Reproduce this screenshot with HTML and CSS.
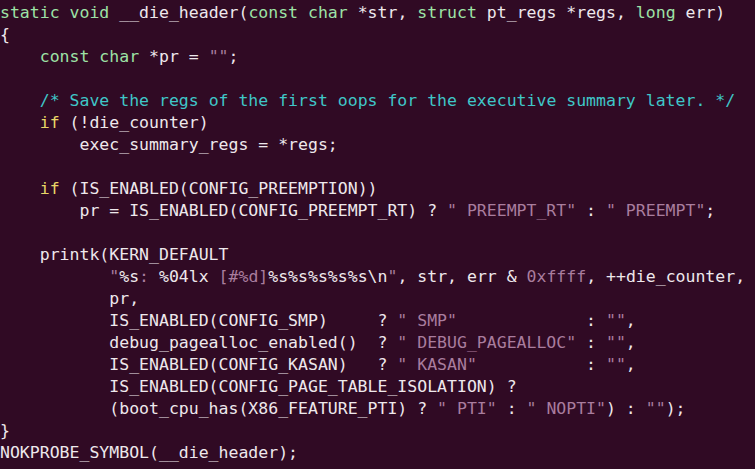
FILE: index.html
```html
<!DOCTYPE html>
<html>
<head>
<meta charset="utf-8">
<link rel="stylesheet" href="styles.css">
</head>
<body>
<pre class="code"><span class="t">static</span> <span class="t">void</span> __die_header(<span class="t">const</span> <span class="t">char</span> *str, <span class="t">struct</span> pt_regs *regs, <span class="t">long</span> err)
{
    <span class="t">const</span> <span class="t">char</span> *pr = <span class="k">""</span>;

    <span class="c">/* Save the regs of the first oops for the executive summary later. */</span>
    <span class="s">if</span> (!die_counter)
        exec_summary_regs = *regs;

    <span class="s">if</span> (IS_ENABLED(CONFIG_PREEMPTION))
        pr = IS_ENABLED(CONFIG_PREEMPT_RT) ? <span class="k">" PREEMPT_RT"</span> : <span class="k">" PREEMPT"</span>;

    printk(KERN_DEFAULT
           <span class="k">"</span><span class="f">%s</span><span class="k">: </span><span class="f">%04lx</span><span class="k"> [#%d]</span><span class="f">%s%s%s%s%s\n</span><span class="k">"</span>, str, err &amp; <span class="k">0xffff</span>, ++die_counter,
           pr,
           IS_ENABLED(CONFIG_SMP)     ? <span class="k">" SMP"</span>             : <span class="k">""</span>,
           debug_pagealloc_enabled()  ? <span class="k">" DEBUG_PAGEALLOC"</span> : <span class="k">""</span>,
           IS_ENABLED(CONFIG_KASAN)   ? <span class="k">" KASAN"</span>           : <span class="k">""</span>,
           IS_ENABLED(CONFIG_PAGE_TABLE_ISOLATION) ?
           (boot_cpu_has(X86_FEATURE_PTI) ? <span class="k">" PTI"</span> : <span class="k">" NOPTI"</span>) : <span class="k">""</span>);
}
NOKPROBE_SYMBOL(__die_header);</pre>
</body>
</html>
```

FILE: styles.css
```css
html, body {
  margin: 0;
  padding: 0;
  background: #300a24;
  height: 100%;
  overflow: hidden;
}

.code {
  margin: 0;
  padding: 2px 0 0 0;
  font-family: "DejaVu Sans Mono", monospace;
  font-size: 16.5px;
  line-height: 22px;
  color: #eee8ec;
  white-space: pre;
}

.t { color: #9de3a6; }
.s { color: #e8d667; }
.c { color: #3fc6c8; }
.k { color: #a97d9e; }
.f { color: #eee8ec; }
```
